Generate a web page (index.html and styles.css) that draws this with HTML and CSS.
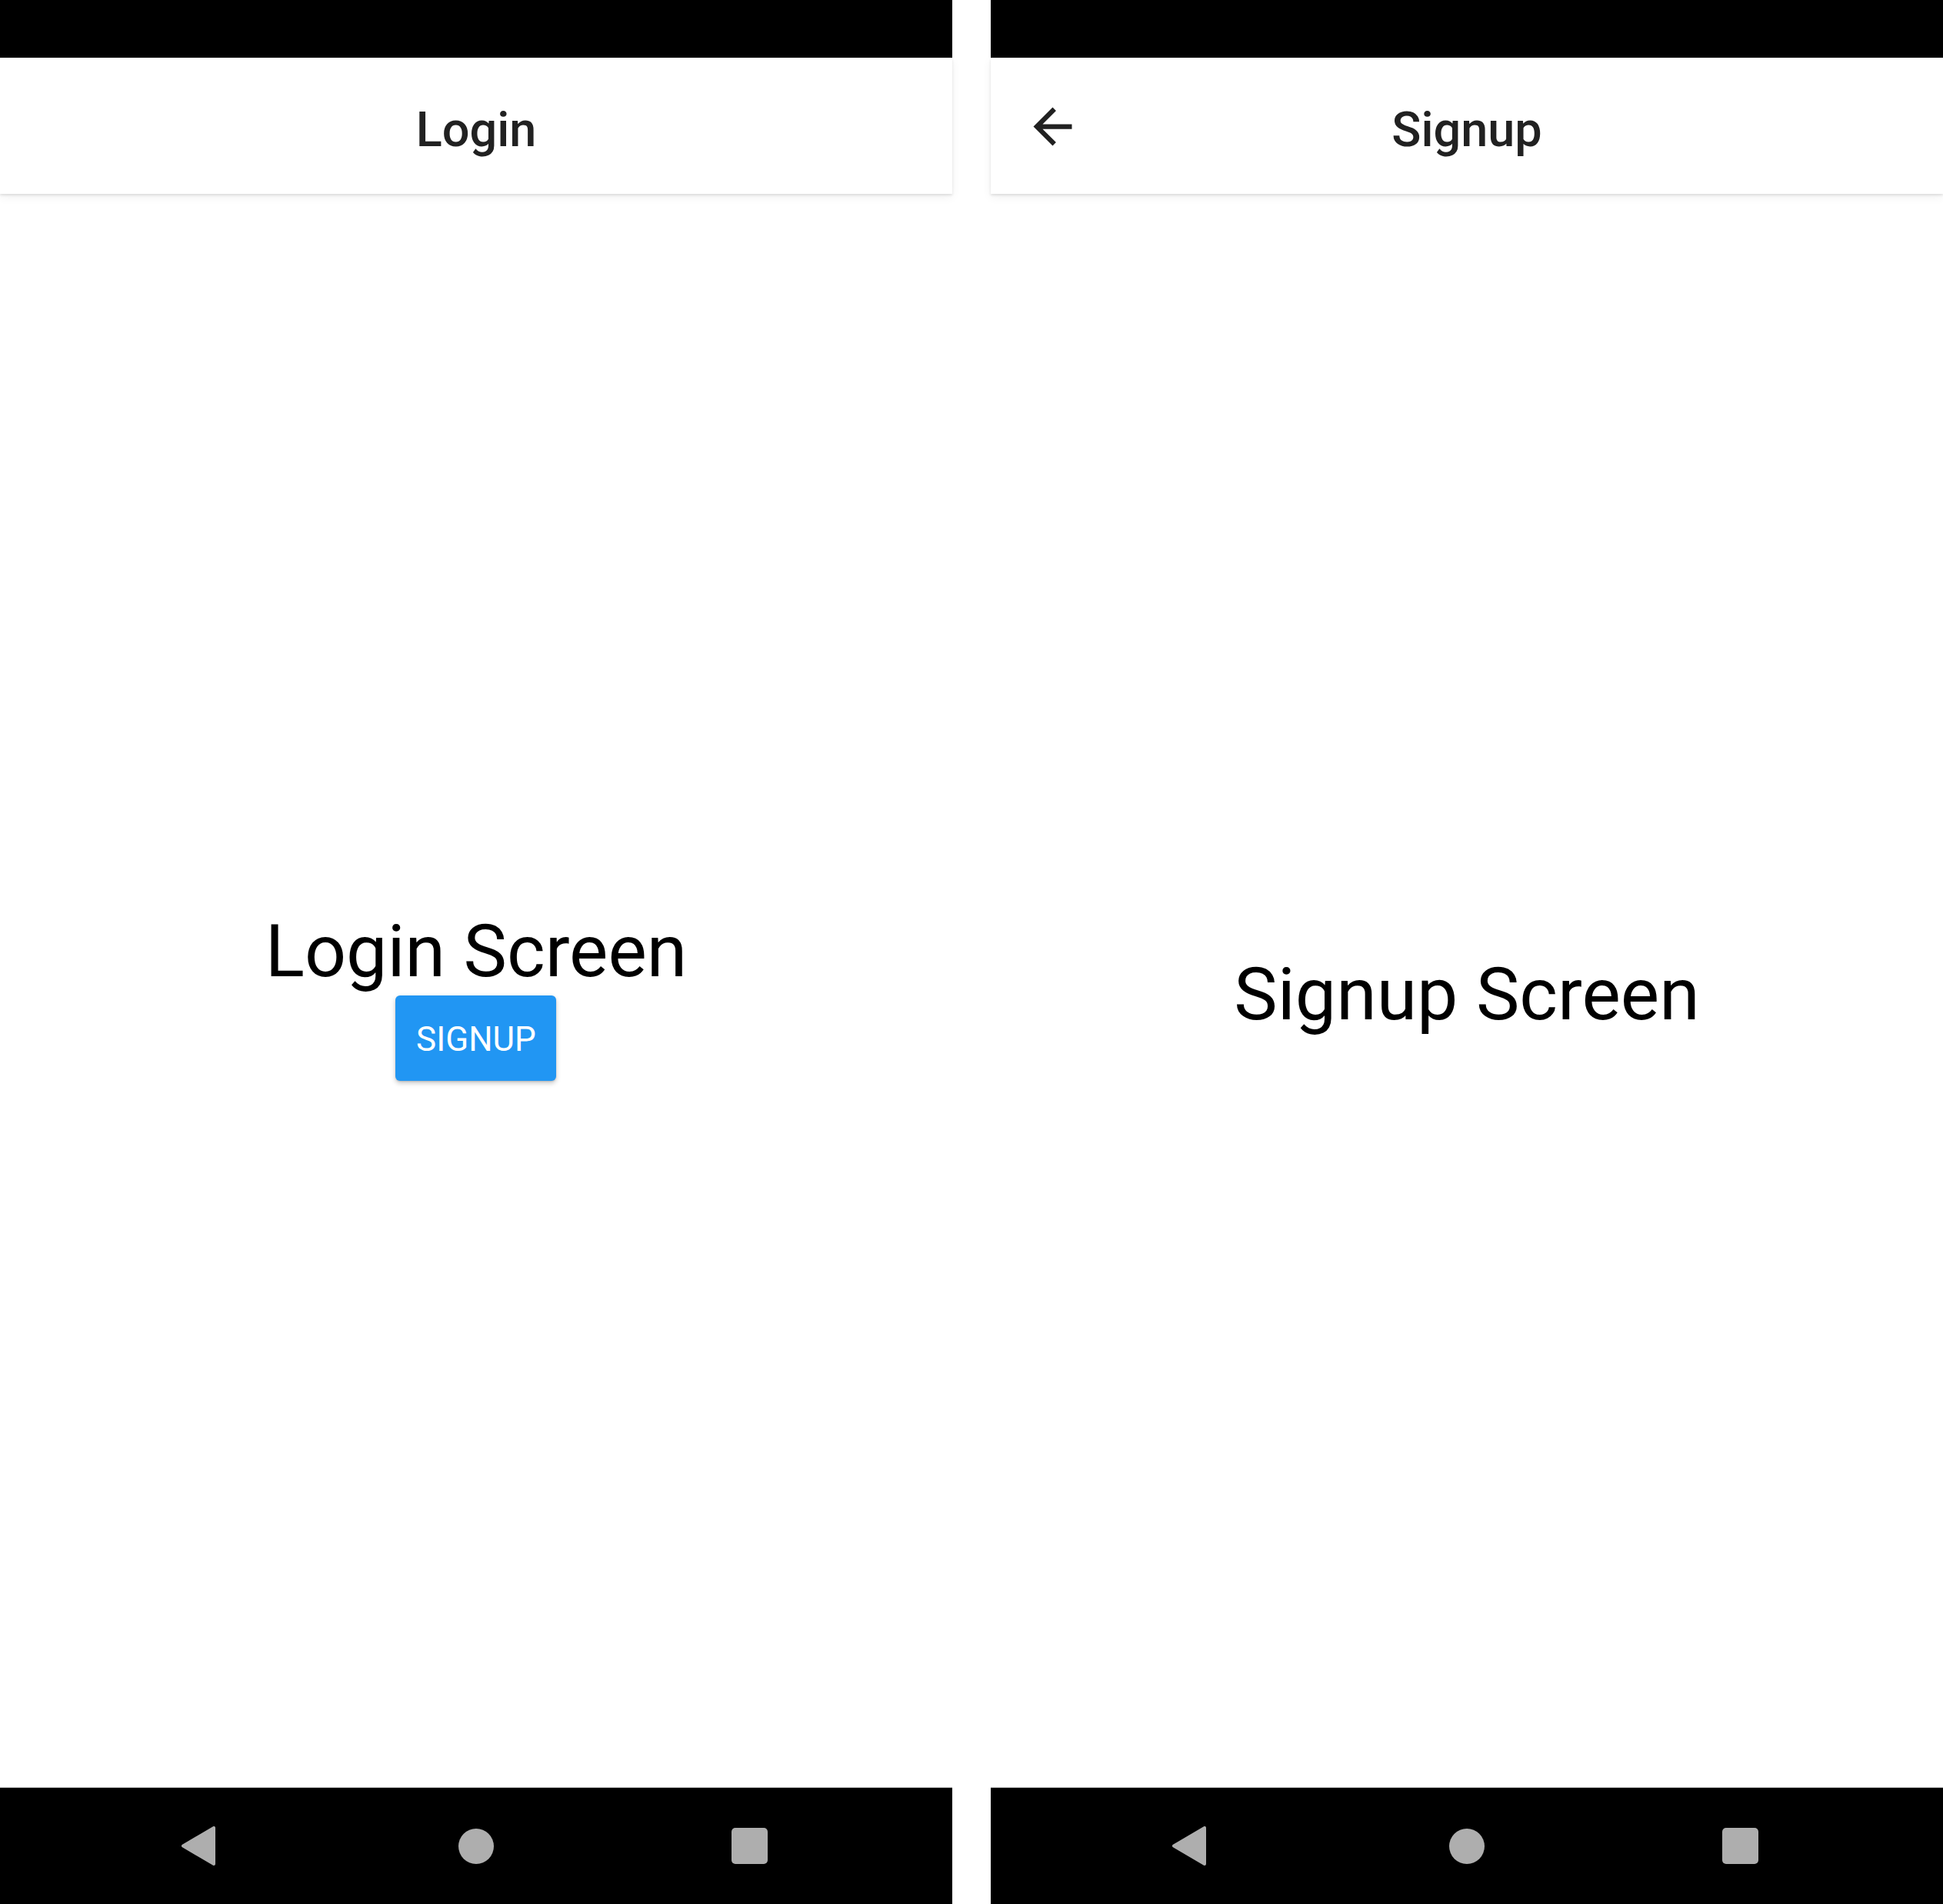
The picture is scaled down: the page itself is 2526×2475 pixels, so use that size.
FILE: index.html
```html
<!DOCTYPE html>
<html lang="en">
<head>
<meta charset="utf-8">
<title>Login / Signup</title>
<link rel="stylesheet" href="styles.css">
</head>
<body>
<div class="screens">
  <section class="phone">
    <div class="status-bar"></div>
    <header class="app-bar">
      <div class="app-bar-left"></div>
      <h1 class="app-bar-title">Login</h1>
      <div class="app-bar-right"></div>
    </header>
    <main class="content">
      <div class="stack">
        <p class="screen-text">Login Screen</p>
        <button class="primary-btn" type="button">SIGNUP</button>
      </div>
    </main>
    <nav class="nav-bar">
      <span class="nav-slot nav-back">
        <svg width="46" height="51" viewBox="0 0 46 51"><polygon points="43,2 43,49 3,25.5" fill="#aeaeae" stroke="#aeaeae" stroke-width="4" stroke-linejoin="round"/></svg>
      </span>
      <span class="nav-slot"><span class="nav-home"></span></span>
      <span class="nav-slot nav-rec"><span class="nav-recents"></span></span>
    </nav>
  </section>

  <section class="phone">
    <div class="status-bar"></div>
    <header class="app-bar">
      <div class="app-bar-left">
        <svg class="back-icon" width="75" height="75" viewBox="0 0 24 24"><path d="M20 11H7.83l5.59-5.59L12 4l-8 8 8 8 1.41-1.41L7.83 13H20v-2z" fill="#212121"/></svg>
      </div>
      <h1 class="app-bar-title">Signup</h1>
      <div class="app-bar-right"></div>
    </header>
    <main class="content">
      <p class="screen-text">Signup Screen</p>
    </main>
    <nav class="nav-bar">
      <span class="nav-slot nav-back">
        <svg width="46" height="51" viewBox="0 0 46 51"><polygon points="43,2 43,49 3,25.5" fill="#aeaeae" stroke="#aeaeae" stroke-width="4" stroke-linejoin="round"/></svg>
      </span>
      <span class="nav-slot"><span class="nav-home"></span></span>
      <span class="nav-slot nav-rec"><span class="nav-recents"></span></span>
    </nav>
  </section>
</div>
</body>
</html>
```

FILE: styles.css
```css
* {
  box-sizing: border-box;
}

html, body {
  margin: 0;
  padding: 0;
  background: #ffffff;
  font-family: Roboto, "Noto Sans", "Liberation Sans", sans-serif;
  overflow: hidden;
}

.screens {
  display: flex;
  gap: 50px;
  width: 2526px;
  height: 2475px;
}

.phone {
  width: 1238px;
  height: 2475px;
  display: flex;
  flex-direction: column;
  background: #ffffff;
}

.status-bar {
  height: 75px;
  flex: none;
  background: #000000;
}

.app-bar {
  height: 177px;
  flex: none;
  display: grid;
  grid-template-columns: 1fr auto 1fr;
  align-items: center;
  background: #ffffff;
  position: relative;
  z-index: 1;
  box-shadow: 0 2px 3px rgba(0, 0, 0, 0.10), 0 4px 12px rgba(0, 0, 0, 0.06);
}

.app-bar-left {
  display: flex;
  align-items: center;
  padding-left: 43px;
}

.back-icon {
  display: block;
  margin-top: 1px;
}

.app-bar-title {
  margin: 0;
  padding-top: 9px;
  font-size: 63px;
  font-weight: 500;
  color: #212121;
  line-height: normal;
}

.content {
  flex: 1;
  display: flex;
  align-items: center;
  justify-content: center;
  padding-top: 10px;
  background: #ffffff;
}

.stack {
  display: flex;
  flex-direction: column;
  align-items: center;
}

.screen-text {
  margin: 0;
  font-size: 95px;
  font-weight: 400;
  color: #000000;
  line-height: normal;
}

.primary-btn {
  margin-top: 2px;
  width: 209px;
  height: 111px;
  border: none;
  border-radius: 6px;
  background: #2196f3;
  color: #ffffff;
  font-family: Roboto, "Noto Sans", "Liberation Sans", sans-serif;
  font-size: 44px;
  font-weight: 400;
  padding: 4px 0 0;
  box-shadow: 0 3px 6px rgba(0, 0, 0, 0.22), 0 1px 2px rgba(0, 0, 0, 0.12);
}

.nav-bar {
  height: 152px;
  flex: none;
  background: #000000;
  border-top: 1px solid #c4c4c4;
  display: flex;
  align-items: center;
  justify-content: center;
  gap: 208px;
}

.nav-slot {
  width: 150px;
  height: 100px;
  display: flex;
  align-items: center;
  justify-content: center;
}

.nav-back {
  padding-right: 6px;
}

.nav-rec {
  padding-right: 6px;
}

.nav-back svg {
  display: block;
}

.nav-home {
  width: 46px;
  height: 46px;
  border-radius: 50%;
  background: #aeaeae;
}

.nav-recents {
  width: 47px;
  height: 47px;
  border-radius: 5px;
  background: #aeaeae;
}
```
